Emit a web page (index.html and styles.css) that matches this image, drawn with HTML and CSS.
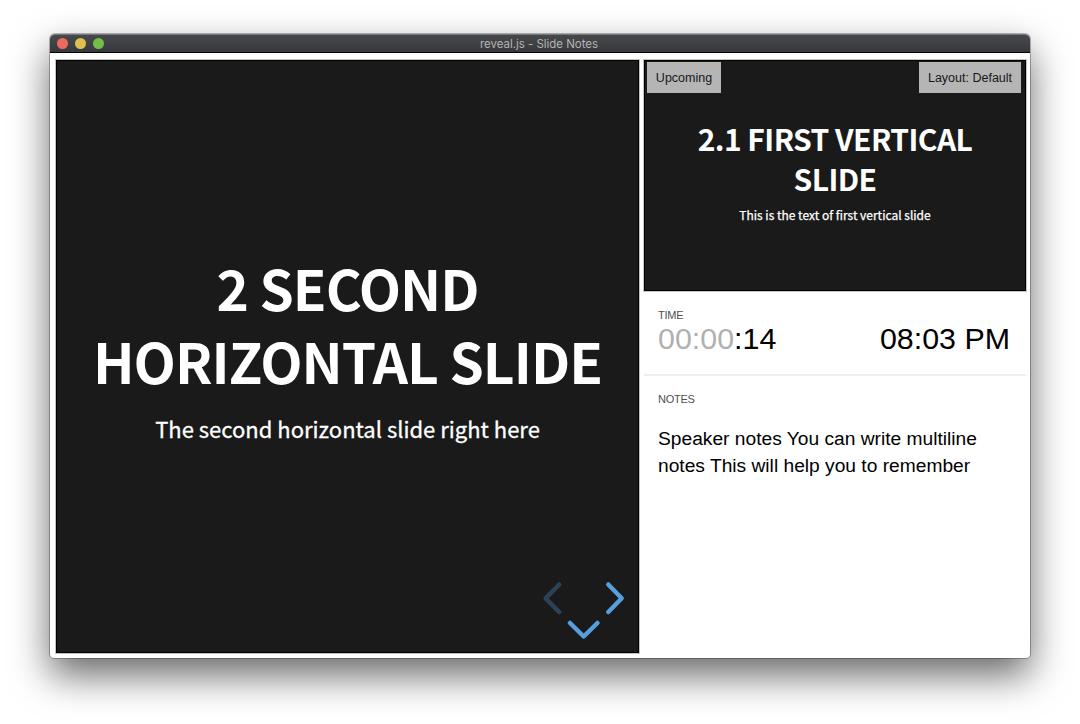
FILE: index.html
```html
<!DOCTYPE html>
<html lang="en">
<head>
<meta charset="utf-8">
<title>reveal.js - Slide Notes</title>
<link rel="stylesheet" href="styles.css">
</head>
<body>
<div class="window">
  <header class="titlebar">
    <div class="lights"><i class="light red"></i><i class="light yellow"></i><i class="light green"></i></div>
    <span class="title">reveal.js - Slide Notes</span>
  </header>
  <main class="content">
    <section class="slide current">
      <h1>2 SECOND<br>HORIZONTAL SLIDE</h1>
      <p>The second horizontal slide right here</p>
      <svg class="controls" viewBox="0 0 90 64" width="90" height="64">
        <path class="off" d="M20.200 9.500 6.600 23.300 20.200 37"/>
        <path d="M69.300 9.500 82.700 23.300 69.300 37"/>
        <path d="M31 48 44.700 61.500 58.400 48"/>
      </svg>
    </section>
    <aside class="side">
      <section class="slide upcoming">
        <span class="tag tag-left">Upcoming</span>
        <span class="tag tag-right">Layout: Default</span>
        <h2>2.1 FIRST VERTICAL<br>SLIDE</h2>
        <p>This is the text of first vertical slide</p>
      </section>
      <section class="time">
        <h4>TIME</h4>
        <div class="clocks">
          <span><span class="mute">00:00</span>:14</span>
          <span>08:03 PM</span>
        </div>
      </section>
      <section class="notes">
        <h4>NOTES</h4>
        <p>Speaker notes You can write multiline<br>notes This will help you to remember</p>
      </section>
    </aside>
  </main>
</div>
</body>
</html>
```
FILE: styles.css
```css
* { box-sizing: border-box; }
html, body { margin: 0; height: 100%; background: #fff; overflow: hidden; }
body { padding: 34px 50px 66px; font-family: "Liberation Sans", Helvetica, sans-serif; color: #000; }
h1, h2, h4, p { margin: 0; }
.window {
  display: flex; flex-direction: column; width: 980px; height: 624px;
  background: #fff; border-radius: 5px 5px 4px 4px;
  box-shadow: 0 0 0 1px rgba(0,0,0,.27), 0 17px 38px rgba(0,0,0,.6);
}
.titlebar {
  display: flex; align-items: center; justify-content: center; position: relative;
  flex: none; height: 19px; background: linear-gradient(#47484b, #38393c);
  border-top: 1px solid #77787a; border-bottom: 1px solid #000; border-radius: 5px 5px 0 0;
}
.lights { position: absolute; left: 7px; top: 3px; display: flex; gap: 7px; }
.light { width: 11px; height: 11px; border-radius: 50%; }
.red { background: #ed6a5f; }
.yellow { background: #e0c04c; }
.green { background: #72be47; }
.title { font: 400 11.500px/17px Inter, sans-serif; color: #b3b4b5; letter-spacing: -.03px; padding-top: 2px; margin-right: 2px; }
.content { display: flex; align-items: flex-start; gap: 5px; padding: 7px 4px 4px 6px; flex: 1; }
.slide {
  background: #1a1a1a; color: #fff; text-align: center; position: relative;
  border: 1px solid #000; outline: 1px solid #c4c4c4; white-space: nowrap;
  font-family: "Noto Sans CJK JP", sans-serif;
}
.current { width: 583px; height: 593px; padding-top: 190px; }
.current h1 { font-size: 55px; line-height: 73px; font-weight: 700; letter-spacing: -.95px; }
.current p { font-size: 22px; line-height: 30px; margin-top: 16px; -webkit-text-stroke: .3px #fff; }
.controls { position: absolute; right: 9px; bottom: 13px; fill: none; stroke: #559fde; stroke-width: 4.500; stroke-linecap: round; stroke-linejoin: round; }
.off { stroke: #2c4257; }
.side { width: 382px; display: flex; flex-direction: column; }
.upcoming { height: 231px; padding-top: 57px; }
.upcoming h2 { font-size: 30px; line-height: 40px; font-weight: 700; letter-spacing: -.56px; }
.upcoming p { font-size: 12px; line-height: 18px; margin-top: 8px; -webkit-text-stroke: .25px #fff; }
.tag { position: absolute; top: 1px; height: 31px; background: #b5b5b5; color: #181818; font: 12.500px/32px "Liberation Sans", sans-serif; }
.tag-left { left: 2px; width: 74px; }
.tag-right { right: 4px; width: 102px; }
h4 { font-size: 11px; line-height: 14px; font-weight: 400; color: #505050; letter-spacing: -.25px; }
.time { height: 85px; padding: 17px 16px 0 14px; border-bottom: 2px solid #eee; }
.clocks { display: flex; justify-content: space-between; font-size: 30.400px; line-height: 32px; }
.mute { color: #b0b0b0; }
.notes { padding: 16px 14px; }
.notes p { font-size: 19.200px; line-height: 27px; margin-top: 19px; white-space: nowrap; }
```
